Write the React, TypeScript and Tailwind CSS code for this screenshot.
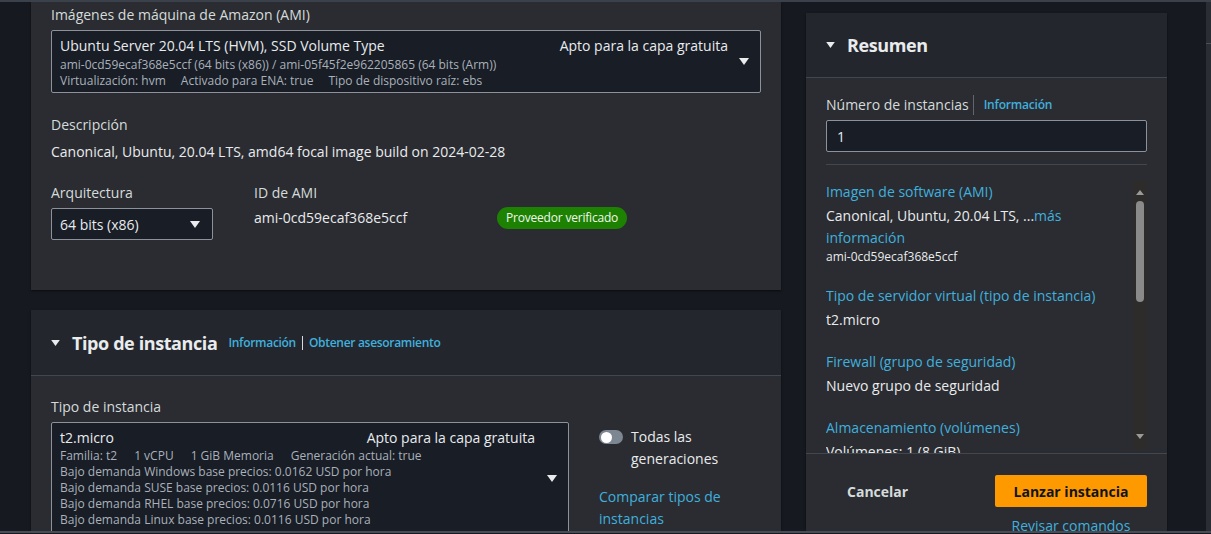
import React from "react";

function Caret({ className = "" }: { className?: string }) {
	return (
		<svg viewBox="0 0 10 7" className={className} fill="currentColor">
			<path d="M0 0h10L5 7z" />
		</svg>
	);
}

function SelectBox({
	className = "",
	caretCol = "w-[32px]",
	children,
}: {
	className?: string;
	caretCol?: string;
	children: React.ReactNode;
}) {
	return (
		<div
			className={`flex items-center rounded-[2px] border border-[#8d9199] bg-[#181d26] ${className}`}
		>
			<div className="min-w-0 flex-1 pl-2">{children}</div>
			<div className={`flex shrink-0 justify-center ${caretCol}`}>
				<Caret className="h-[7px] w-[10px] text-[#e9ebed]" />
			</div>
		</div>
	);
}

function AmiCard() {
	return (
		<section className="bg-[#2a2c31] px-5 pb-[50px] pt-[3px] shadow-[0_1px_2px_rgba(0,0,0,0.6)]">
			<div className="leading-5 text-[#d5dbdb]">
				Imágenes de máquina de Amazon (AMI)
			</div>
			<SelectBox className="mt-[5px]">
				<div className="pb-[3px] pt-[5px]">
					<div className="flex justify-between leading-5">
						<span>Ubuntu Server 20.04 LTS (HVM), SSD Volume Type</span>
						<span>Apto para la capa gratuita</span>
					</div>
					<div className="mt-[1px] text-[12px] leading-4 text-[#aab1ba]">
						ami-0cd59ecaf368e5ccf (64 bits (x86)) / ami-05f45f2e962205865 (64
						bits (Arm))
					</div>
					<div className="flex gap-[15px] text-[12px] leading-4 text-[#aab1ba]">
						<span>Virtualización: hvm</span>
						<span>Activado para ENA: true</span>
						<span>Tipo de dispositivo raíz: ebs</span>
					</div>
				</div>
			</SelectBox>

			<div className="mt-[22px] leading-5 text-[#d5dbdb]">Descripción</div>
			<div className="mt-[7px] leading-5">
				Canonical, Ubuntu, 20.04 LTS, amd64 focal image build on 2024-02-28
			</div>

			<div className="mt-[21px] flex">
				<div className="w-[203px] shrink-0">
					<div className="leading-5 text-[#d5dbdb]">Arquitectura</div>
					<SelectBox className="mt-[5px] h-[32px] w-[162px]" caretCol="w-[34px]">
						<span className="leading-5">64 bits (x86)</span>
					</SelectBox>
				</div>
				<div>
					<div className="leading-5 text-[#d5dbdb]">ID de AMI</div>
					<div className="mt-[4px] flex items-center">
						<span className="w-[243px] leading-5">ami-0cd59ecaf368e5ccf</span>
						<span className="flex h-[22px] items-center rounded-full bg-[#1d8102] px-[9px] text-[12px] font-medium tracking-[-0.2px] text-[#f1f8ef]">
							Proveedor verificado
						</span>
					</div>
				</div>
			</div>
		</section>
	);
}

function InstanceTypeCard() {
	const prices = [
		"Bajo demanda Windows base precios: 0.0162 USD por hora",
		"Bajo demanda SUSE base precios: 0.0116 USD por hora",
		"Bajo demanda RHEL base precios: 0.0716 USD por hora",
		"Bajo demanda Linux base precios: 0.0116 USD por hora",
	];
	return (
		<section className="bg-[#2a2c31] shadow-[0_1px_2px_rgba(0,0,0,0.6)]">
			<div className="flex h-[66px] items-center border-b border-[#414750] bg-[#23262c] px-5">
				<Caret className="h-[6px] w-[9px] text-[#e9ebed]" />
				<h2 className="ml-[12px] text-[18px] font-bold leading-6 tracking-[-0.4px]">
					Tipo de instancia
				</h2>
				<div className="ml-[11px] flex items-center gap-[6px] text-[12px] font-semibold tracking-[-0.3px] text-[#40b0de]">
					<span>Información</span>
					<span className="h-[14px] w-px bg-[#d5dbdb]" />
					<span>Obtener asesoramiento</span>
				</div>
			</div>
			<div className="px-5 pt-[21px]">
				<div className="leading-5 text-[#d5dbdb]">Tipo de instancia</div>
				<div className="mt-[5px] flex">
					<SelectBox className="w-[518px]" caretCol="w-[33px]">
						<div className="pb-[6px] pt-[5px]">
							<div className="flex justify-between leading-5">
								<span>t2.micro</span>
								<span>Apto para la capa gratuita</span>
							</div>
							<div className="flex gap-[17px] text-[12px] leading-4 text-[#aab1ba]">
								<span>Familia: t2</span>
								<span>1 vCPU</span>
								<span>1 GiB Memoria</span>
								<span>Generación actual: true</span>
							</div>
							{prices.map((p) => (
								<div key={p} className="text-[12px] leading-4 text-[#aab1ba]">
									{p}
								</div>
							))}
						</div>
					</SelectBox>
					<div className="ml-[30px] pt-[4px]">
						<div className="flex items-start gap-[8px]">
							<span className="mt-[4px] flex h-[14px] w-[24px] items-center rounded-full bg-[#7d8792] px-[2px]">
								<span className="size-[11px] rounded-full bg-white" />
							</span>
							<span className="leading-[22px]">
								Todas las
								<br />
								generaciones
							</span>
						</div>
						<div className="mt-[16px] leading-[22px] text-[#40b0de]">
							Comparar tipos de
							<br />
							instancias
						</div>
					</div>
				</div>
			</div>
		</section>
	);
}

function SummaryItem({
	title,
	children,
}: {
	title: string;
	children: React.ReactNode;
}) {
	return (
		<div className="mb-[21px]">
			<div className="leading-5 text-[#40b0de]">{title}</div>
			<div className="mt-[3px]">{children}</div>
		</div>
	);
}

function Summary() {
	return (
		<aside className="mt-[11px] flex w-[361px] shrink-0 flex-col bg-[#2a2c31] shadow-[0_1px_2px_rgba(0,0,0,0.6)]">
			<div className="flex h-[65px] shrink-0 items-center border-b border-[#414750] bg-[#23262c] px-5">
				<Caret className="h-[6px] w-[9px] text-[#e9ebed]" />
				<h2 className="ml-[12px] text-[18px] font-bold leading-6 tracking-[-0.4px]">
					Resumen
				</h2>
			</div>

			<div className="shrink-0 px-5 pt-[17px]">
				<div className="flex items-center leading-5">
					<span className="border-r border-[#5f6670] pr-[4px] text-[#d5dbdb]">
						Número de instancias
					</span>
					<span className="pl-[10px] text-[12px] font-semibold tracking-[-0.2px] text-[#40b0de]">
						Información
					</span>
				</div>
				<div className="mt-[5px] flex h-[32px] items-center rounded-[2px] border border-[#8d9199] bg-[#181d26] px-[10px]">
					1
				</div>
				<div className="mt-[12px] h-px bg-[#414750]" />
			</div>

			<div className="flex h-[288px] shrink-0 px-5">
				<div className="min-w-0 flex-1 overflow-hidden pt-[17px]">
					<SummaryItem title="Imagen de software (AMI)">
						<div className="leading-[22px]">
							Canonical, Ubuntu, 20.04 LTS, ...
							<span className="text-[#40b0de]">más</span>
							<br />
							<span className="text-[#40b0de]">información</span>
						</div>
						<div className="text-[12px] leading-4">ami-0cd59ecaf368e5ccf</div>
					</SummaryItem>
					<SummaryItem title="Tipo de servidor virtual (tipo de instancia)">
						<div className="leading-[22px]">t2.micro</div>
					</SummaryItem>
					<SummaryItem title="Firewall (grupo de seguridad)">
						<div className="leading-[22px]">Nuevo grupo de seguridad</div>
					</SummaryItem>
					<SummaryItem title="Almacenamiento (volúmenes)">
						<div className="leading-[22px]">Volúmenes: 1 (8 GiB)</div>
					</SummaryItem>
				</div>
				<div className="mb-[3px] mt-[15px] flex w-[14px] shrink-0 flex-col items-center bg-[#2d2c2b] pt-[10px]">
					<svg viewBox="0 0 8 5" className="h-[5px] w-[8px]" fill="#9a9a9a">
						<path d="M0 5h8L4 0z" />
					</svg>
					<div className="mt-[6px] h-[101px] w-[8px] rounded-full bg-[#8a8a8a]" />
					<div className="flex-1" />
					<svg viewBox="0 0 8 5" className="mb-[11px] h-[5px] w-[8px]" fill="#9a9a9a">
						<path d="M0 0h8L4 5z" />
					</svg>
				</div>
			</div>

			<div className="shrink-0 border-t border-[#414750] px-5 pt-[21px]">
				<div className="flex items-start justify-between">
					<button className="flex h-[32px] items-center px-[21px] font-bold text-[#d5dbdb]">
						Cancelar
					</button>
					<div className="flex flex-col items-center">
						<button className="flex h-[32px] w-[152px] items-center justify-center rounded-[2px] bg-[#ff9900] font-bold text-[#0f141a]">
							Lanzar instancia
						</button>
						<span className="mt-[9px] leading-5 text-[#40b0de]">
							Revisar comandos
						</span>
					</div>
				</div>
			</div>
		</aside>
	);
}

export default function App() {
	return (
		<div className="flex h-[534px] w-[1211px] flex-col overflow-hidden bg-[#161a20] font-['Open_Sans',sans-serif] text-[14px] text-[#e9ebed]">
			<div className="h-[2px] shrink-0 bg-[#3b414a]" />
			<div className="flex min-h-0 flex-1 overflow-hidden">
				<div className="flex min-h-0 flex-1 gap-[25px] pl-[31px]">
					<div className="flex w-[750px] shrink-0 flex-col gap-[20px]">
						<AmiCard />
						<InstanceTypeCard />
					</div>
					<Summary />
				</div>
				<div className="flex w-[5px] shrink-0 flex-col bg-[#2a2d33]">
					<div className="h-[41px]" />
					<div className="h-px bg-[#4a4f57]" />
				</div>
			</div>
			<div className="h-[2px] shrink-0 bg-[#474c55]" />
			<div className="h-px shrink-0 bg-[#161a20]" />
		</div>
	);
}
